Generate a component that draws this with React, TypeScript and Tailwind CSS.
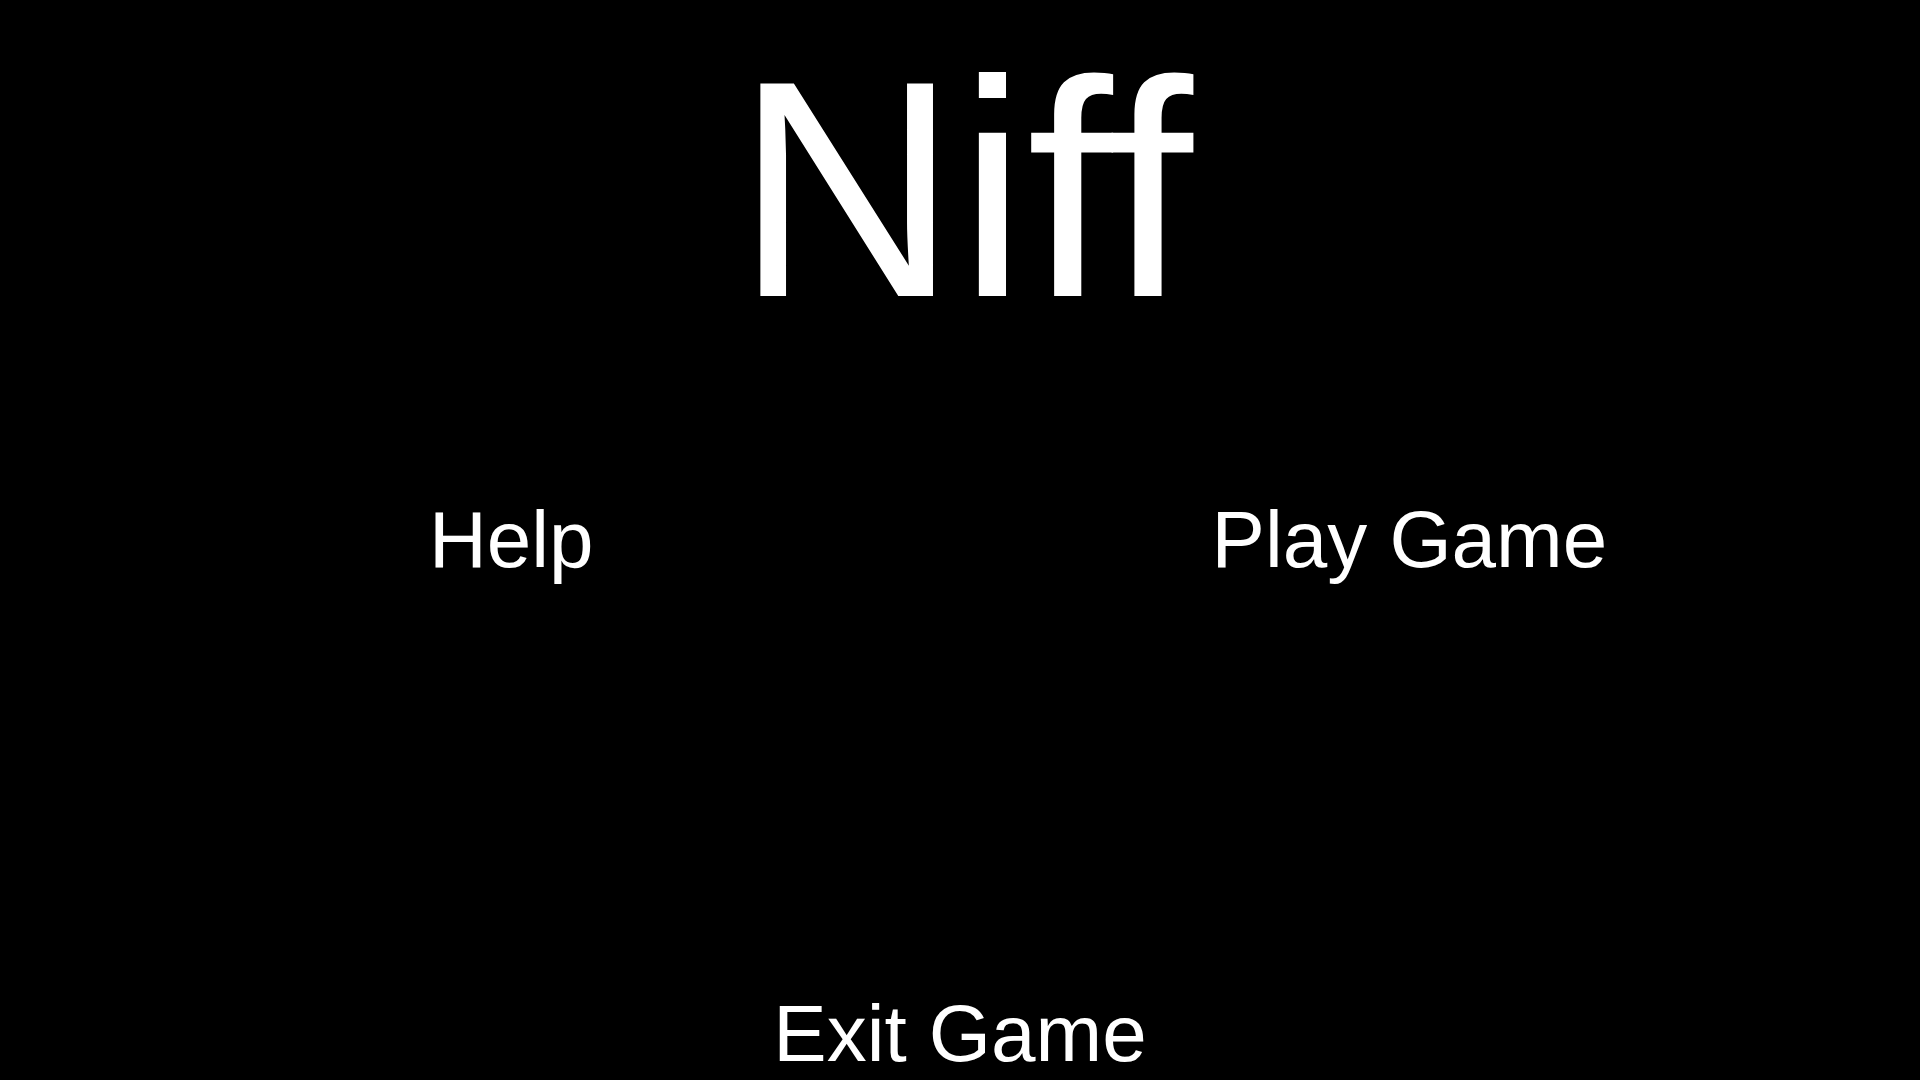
import React from 'react';

// Main menu screen
export default function App() {
  return (
    <div
      className="w-[1920px] h-[1080px] bg-black text-white overflow-hidden flex flex-col"
      style={{ fontFamily: '"Liberation Sans", Arial, sans-serif' }}
    >
      <h1 className="mt-[34px] pl-[8px] text-[309px] leading-[309px] text-center font-normal [font-variant-ligatures:none]">
        Niff
      </h1>

      <div className="mt-[157px] flex pl-[429px] gap-[618px] text-[80px] leading-[80px]">
        <button className="cursor-pointer">Help</button>
        <button className="cursor-pointer">Play Game</button>
      </div>

      <div className="mt-[414px] flex justify-center text-[80px] leading-[80px]">
        <button className="cursor-pointer">Exit Game</button>
      </div>
    </div>
  );
}
